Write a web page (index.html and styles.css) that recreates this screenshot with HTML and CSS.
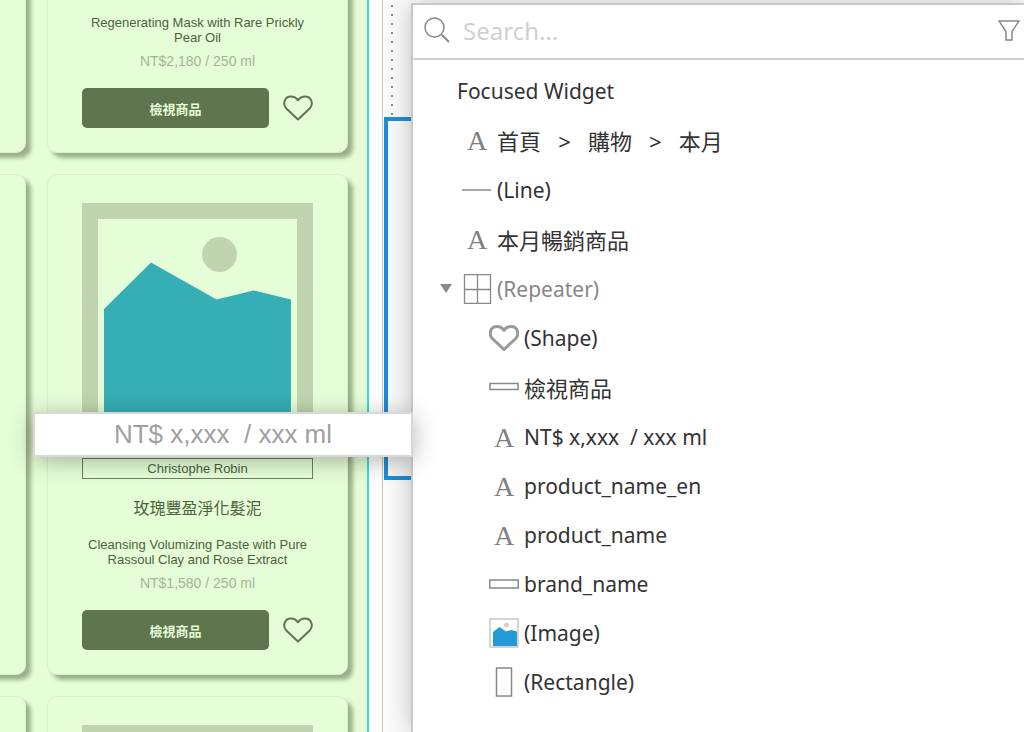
FILE: index.html
```html
<!DOCTYPE html>
<html lang="zh-Hant">
<head>
    <meta charset="UTF-8">
    <meta name="viewport" content="width=device-width, initial-scale=1.0">
    <title>Outline</title>
    <link rel="stylesheet" href="styles.css">
</head>
<body>

    <svg class="defs">
        <symbol id="picture" viewBox="0 0 231 246">
            <rect x="8" y="8" width="215" height="230" fill="none" stroke="#c0d5af" stroke-width="16"/>
            <circle cx="137.500" cy="51.500" r="17.5" fill="#c0d5af"/>
            <path d="M22 106L69 59.500L134.500 96.500L171.500 87.500L209 96.500V224H22Z" fill="#36aeb5"/>
        </symbol>
        <symbol id="heart" viewBox="0 0 30 26">
            <path d="M15 24.500L3.300 13.500C-0.500 9.500 1 1.500 8 1.500C11.500 1.500 13.500 3.200 15 5.300C16.500 3.200 18.500 1.500 22 1.500C29 1.500 30.500 9.500 26.700 13.500Z" fill="none" stroke="currentColor" stroke-linejoin="round"/>
        </symbol>
    </svg>

    <div class="workspace">
        <main class="canvas">
            <div class="cards">
                <div class="card"></div>
                <div class="card">
                    <svg class="picture"><use href="#picture"/></svg>
                    <div class="brand"></div>
                    <div class="name"></div>
                    <div class="name-en">Regenerating Mask with Rare Prickly Pear Oil</div>
                    <div class="price">NT$2,180 / 250 ml</div>
                    <div class="actions">
                        <button class="view">檢視商品</button>
                        <svg class="heart"><use href="#heart"/></svg>
                    </div>
                </div>
                <div class="card"></div>
                <div class="card">
                    <svg class="picture"><use href="#picture"/></svg>
                    <div class="brand">Christophe Robin</div>
                    <div class="name">玫瑰豐盈淨化髮泥</div>
                    <div class="name-en">Cleansing Volumizing Paste with Pure Rassoul Clay and Rose Extract</div>
                    <div class="price">NT$1,580 / 250 ml</div>
                    <div class="actions">
                        <button class="view">檢視商品</button>
                        <svg class="heart"><use href="#heart"/></svg>
                    </div>
                </div>
                <div class="card"></div>
                <div class="card">
                    <svg class="picture"><use href="#picture"/></svg>
                </div>
            </div>
        </main>

        <div class="gutter">
            <div class="dots"></div>
            <div class="selection"></div>
        </div>

        <aside class="panel">
            <div class="search">
                <svg class="search-icon" viewBox="0 0 26 26" fill="none" stroke="#888" stroke-width="1.5">
                    <circle cx="10.500" cy="10.500" r="9.500"/>
                    <path d="M18 18L25 25" stroke-width="2"/>
                </svg>
                <input type="text" placeholder="Search..." aria-label="Search">
                <svg class="filter-icon" viewBox="0 0 22 21" fill="none" stroke="#888" stroke-width="1.500">
                    <path d="M1 1H21L14 11.500V20H8V11.500Z"/>
                </svg>
            </div>
            <ul class="tree">
                <li class="title">Focused Widget</li>
                <li class="cjk"><span class="icon letter">A</span><span>首頁   &gt;   購物   &gt;   本月</span></li>
                <li>
                    <svg class="icon" viewBox="0 0 30 30"><path d="M0 15H29" stroke="#888" stroke-width="1.500"/></svg>
                    <span>(Line)</span>
                </li>
                <li class="cjk"><span class="icon letter">A</span><span>本月暢銷商品</span></li>
                <li class="parent">
                    <button class="toggle" aria-label="Collapse"></button>
                    <svg class="icon" viewBox="0 0 30 30" fill="none" stroke="#888" stroke-width="1.300"><path d="M2.500 0.500H28.500V29.500H2.500ZM15.500 0.500V29.500M2.500 15.500H28.500"/></svg>
                    <span>(Repeater)</span>
                </li>
                <li class="child">
                    <svg class="icon shape" viewBox="0 0 30 30"><use href="#heart" y="2" width="30" height="26"/></svg>
                    <span>(Shape)</span>
                </li>
                <li class="child cjk">
                    <svg class="icon" viewBox="0 0 30 30"><rect x="1" y="11.500" width="28" height="6" fill="none" stroke="#888" stroke-width="1.500"/></svg>
                    <span>檢視商品</span>
                </li>
                <li class="child"><span class="icon letter">A</span><span>NT$ x,xxx  / xxx ml</span></li>
                <li class="child"><span class="icon letter">A</span><span>product_name_en</span></li>
                <li class="child"><span class="icon letter">A</span><span>product_name</span></li>
                <li class="child">
                    <svg class="icon" viewBox="0 0 30 30"><rect x="0.700" y="11" width="28.600" height="8" fill="none" stroke="#888" stroke-width="1.500"/></svg>
                    <span>brand_name</span>
                </li>
                <li class="child">
                    <svg class="icon" viewBox="0 0 30 30">
                        <rect x="1" y="1" width="28" height="28" fill="#fff" stroke="#c8c8c8" stroke-width="1.500"/>
                        <circle cx="17.500" cy="7" r="2.500" fill="#d0d0d0"/>
                        <path d="M4 14L10.500 9L17 13.500L22 12L28 13.500V28H4Z" fill="#239ad6"/>
                    </svg>
                    <span>(Image)</span>
                </li>
                <li class="child">
                    <svg class="icon" viewBox="0 0 30 30"><rect x="7.500" y="1" width="15" height="28" fill="none" stroke="#888" stroke-width="1.500"/></svg>
                    <span>(Rectangle)</span>
                </li>
            </ul>
        </aside>

        <div class="ghost">NT$ x,xxx  / xxx ml</div>
    </div>

</body>
</html>
```
FILE: styles.css
```css
* {
    box-sizing: border-box;
}
body {
    margin: 0;
    font-family: "Liberation Sans", "Noto Sans CJK TC", sans-serif;
    background-color: white;
}
.defs {
    position: absolute;
    width: 0;
    height: 0;
}
.workspace {
    position: relative;
    display: flex;
    height: 100vh;
    overflow: hidden;
}

/* product cards */
.canvas {
    flex: 0 0 369px;
    display: flex;
    justify-content: flex-end;
    align-items: flex-start;
    overflow: hidden;
    padding-right: 19px;
    background-color: #e6fed8;
    border-right: 2px solid #36dcd8;
}
.cards {
    display: grid;
    grid-template-columns: 301px 301px;
    grid-auto-rows: 501px;
    gap: 21px;
    flex-shrink: 0;
    /* scrolled down past the first row */
    margin-top: -348px;
}
.card {
    display: flex;
    flex-direction: column;
    padding: 28px 34px 0;
    text-align: center;
    color: #4a633b;
    background-color: #e6fed8;
    border: 1px solid #d9efca;
    border-radius: 10px;
    box-shadow: 5px 5px 4px #9bb08a;
}
.picture {
    width: 231px;
    height: 246px;
    flex-shrink: 0;
}
.brand {
    height: 21px;
    margin-top: 9px;
    font-size: 13px;
    line-height: 19px;
    border: 1px solid #6b835c;
}
.name {
    height: 24px;
    margin-top: 18px;
    font-size: 16px;
    line-height: 24px;
}
.name-en {
    margin-top: 16px;
    font-size: 13px;
    line-height: 15px;
}
.price {
    margin-top: 7px;
    font-size: 14px;
    line-height: 18px;
    color: #a0b890;
}
.actions {
    display: flex;
    align-items: center;
    justify-content: space-between;
    margin-top: 18px;
}
.view {
    width: 187px;
    height: 40px;
    padding: 0;
    font-family: inherit;
    font-size: 13px;
    font-weight: bold;
    color: #e6fed8;
    background-color: #5e754e;
    border: none;
    border-radius: 5px;
}
.heart {
    width: 30px;
    height: 26px;
    color: #5e754e;
    stroke-width: 2;
}

/* strip between the canvas and the panel */
.gutter {
    flex: 0 0 29px;
    margin-left: 13px;
    border-left: 1px solid #c4c4c4;
    background-color: #fbfbfb;
}
.dots {
    height: 117px;
    background: radial-gradient(circle at 9px 6px, #888 1px, transparent 1px) 0 0 / 29px 9px;
}
.selection {
    height: 363px;
    margin-left: 1px;
    border: 4px solid #1c8fdc;
    border-right: none;
}

/* outline panel */
.panel {
    flex: 1;
    margin-top: 3px;
    font-family: "Noto Sans", "Noto Sans CJK TC", sans-serif;
    color: #333;
    background-color: white;
    border-top: 2px solid #c8c8c8;
    border-left: 2px solid #c8c8c8;
    box-shadow: 0 0 24px rgba(0, 0, 0, 0.25);
}
.search {
    display: flex;
    align-items: center;
    height: 55px;
    padding: 0 4px 3px 11px;
    border-bottom: 2px solid #d0d0d0;
}
.search-icon {
    width: 26px;
    height: 26px;
}
.search input {
    flex: 1;
    min-width: 0;
    margin-left: 13px;
    padding: 0;
    font-family: inherit;
    font-size: 24px;
    border: none;
    outline: none;
}
.search input::placeholder {
    color: #d0d0d0;
}
.filter-icon {
    width: 22px;
    height: 21px;
}
.tree {
    margin: 0;
    padding: 6px 0 0;
    list-style: none;
    font-size: 21px;
}
.tree li {
    display: flex;
    align-items: center;
    gap: 5px;
    height: 49px;
    padding-left: 49px;
    white-space: pre;
}
.tree .title {
    padding-left: 44px;
}
.tree .cjk {
    height: 50px;
    font-size: 22px;
}
.tree .parent {
    padding-left: 27px;
    color: #888;
}
.tree .child {
    padding-left: 76px;
}
.icon {
    flex: 0 0 30px;
    height: 30px;
}
.tree .letter {
    font-family: "Liberation Serif", serif;
    font-size: 28px;
    line-height: 32px;
    text-align: center;
    color: #808080;
}
.shape {
    color: #999;
    stroke-width: 3;
}
.toggle {
    width: 12px;
    height: 9px;
    margin-right: 5px;
    padding: 0;
    border: none;
    background-color: #888;
    clip-path: polygon(0 0, 100% 0, 50% 100%);
}

/* widget being dragged over the canvas */
.ghost {
    position: absolute;
    top: 412px;
    left: 33px;
    width: 380px;
    height: 45px;
    font-size: 26px;
    line-height: 41px;
    text-align: center;
    white-space: pre;
    color: #a0a0a0;
    background-color: white;
    border: 2px solid #d8d8d8;
    box-shadow: 0 4px 24px rgba(0, 0, 0, 0.3);
}
```
